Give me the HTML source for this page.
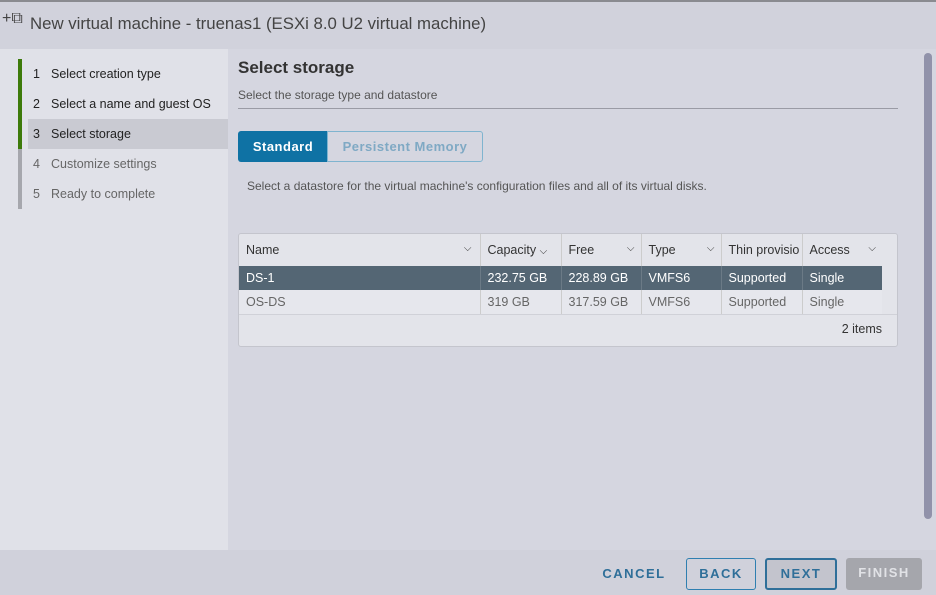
<!DOCTYPE html><html><head><style>
*{box-sizing:border-box;margin:0;padding:0}
body{width:936px;height:595px;overflow:hidden;background:#d3d4de;font-family:"Liberation Sans",sans-serif;position:relative;color:#333}
.hdr{position:absolute;left:0;top:0;width:936px;height:49px;background:#d1d2dc;border-top:2px solid #8a8b90}
.hdr .t{position:absolute;left:30px;top:12px;font-size:16.8px;color:#444}
.left{position:absolute;left:0;top:49px;width:228px;height:501px;background:#e0e1e8}
.bar{position:absolute;left:18px;width:4px}
.step{position:absolute;left:28px;width:200px;height:30px;line-height:30px;font-size:12.5px;padding-left:5px}
.step b{display:inline-block;width:18px;font-weight:normal}
.main{position:absolute;left:228px;top:49px;width:708px;height:501px;background:#d5d6e0}
.foot{position:absolute;left:0;top:550px;width:936px;height:45px;background:#d0d1db}
.btn{position:absolute;top:558px;height:32px;line-height:30px;text-align:center;font-size:13px;font-weight:bold;letter-spacing:1.5px;color:#2f6f99;border-radius:3px}
table{border-collapse:collapse;font-size:12.5px}
td,th{height:24px;padding-left:7px;text-align:left;font-weight:normal}
</style></head><body>
<div class="hdr"><span style="position:absolute;left:2px;top:8px;font-size:16px;color:#444">+⧉</span><div class="t">New virtual machine - truenas1 (ESXi 8.0 U2 virtual machine)</div></div>
<div class="left">
<div class="bar" style="top:10px;height:90px;background:#3d7a0a"></div>
<div class="bar" style="top:100px;height:60px;background:#a6a7ad"></div>
<div class="step" style="top:10px;color:#222"><b>1</b>Select creation type</div>
<div class="step" style="top:40px;color:#222"><b>2</b>Select a name and guest OS</div>
<div class="step" style="top:70px;background:#c9cad2;color:#222"><b>3</b>Select storage</div>
<div class="step" style="top:100px;color:#666"><b>4</b>Customize settings</div>
<div class="step" style="top:130px;color:#666"><b>5</b>Ready to complete</div>
</div>
<div class="main">
<div style="position:absolute;left:10px;top:9px;font-size:17px;font-weight:bold;color:#333">Select storage</div>
<div style="position:absolute;left:10px;top:39px;font-size:12px;color:#555">Select the storage type and datastore</div>
<div style="position:absolute;left:10px;top:59px;width:660px;height:1px;background:#9a9ba5"></div>
<div style="position:absolute;left:10px;top:82px;width:90px;height:31px;background:#0f72a4;color:#fff;font-weight:bold;font-size:13px;line-height:31px;text-align:center;letter-spacing:.5px;border-radius:3px 0 0 3px">Standard</div>
<div style="position:absolute;left:99px;top:82px;width:156px;height:31px;border:1px solid #7fb4cf;color:#7fa9c4;font-weight:bold;font-size:13px;line-height:29px;text-align:center;letter-spacing:.5px;border-radius:0 3px 3px 0">Persistent Memory</div>
<div style="position:absolute;left:19px;top:130px;font-size:12px;color:#555">Select a datastore for the virtual machine's configuration files and all of its virtual disks.</div>
<div style="position:absolute;left:10px;top:184px;width:660px;height:114px;background:#e3e4ea;border:1px solid #c4c5cd;border-radius:3px;overflow:hidden">
<table style="width:643px">
<tr style="height:32px;color:#333"><th style="width:241px">Name <span style="float:right;padding-right:8px;font-size:10px">⌵</span></th><th style="width:81px;border-left:1px solid #ccc">Capacity <span style="font-size:10px">⌵</span></th><th style="width:80px;border-left:1px solid #ccc">Free<span style="float:right;padding-right:6px;font-size:10px">⌵</span></th><th style="width:80px;border-left:1px solid #ccc">Type<span style="float:right;padding-right:6px;font-size:10px">⌵</span></th><th style="width:81px;border-left:1px solid #ccc;white-space:nowrap;overflow:hidden">Thin provisio</th><th style="border-left:1px solid #ccc">Access<span style="float:right;padding-right:6px;font-size:10px">⌵</span></th></tr>
<tr style="background:#546674;color:#fff"><td>DS-1</td><td style="border-left:1px solid #6b7a86">232.75 GB</td><td style="border-left:1px solid #6b7a86">228.89 GB</td><td style="border-left:1px solid #6b7a86">VMFS6</td><td style="border-left:1px solid #6b7a86">Supported</td><td style="border-left:1px solid #6b7a86">Single</td></tr>
<tr style="color:#666;background:#e6e7ed"><td>OS-DS</td><td style="border-left:1px solid #ccc">319 GB</td><td style="border-left:1px solid #ccc">317.59 GB</td><td style="border-left:1px solid #ccc">VMFS6</td><td style="border-left:1px solid #ccc">Supported</td><td style="border-left:1px solid #ccc">Single</td></tr>
</table>
<div style="position:absolute;left:0;top:80px;width:660px;border-top:1px solid #d0d1d8"></div>
<div style="position:absolute;right:15px;top:88px;font-size:12.5px;color:#333">2 items</div>
</div>
<div style="position:absolute;left:696px;top:4px;width:8px;height:466px;background:#9192aa;border-radius:4px"></div>
</div>
<div class="foot"></div>
<div class="btn" style="left:598px;width:72px;top:559px">CANCEL</div>
<div class="btn" style="left:686px;width:70px;border:1px solid #2f7fb0">BACK</div>
<div class="btn" style="left:765px;width:72px;border:2px solid #2f6f99;background:#c3c4cd;line-height:27px">NEXT</div>
<div class="btn" style="left:846px;width:76px;background:#a5a6ac;color:#e1e2e6">FINISH</div>
</body></html>
